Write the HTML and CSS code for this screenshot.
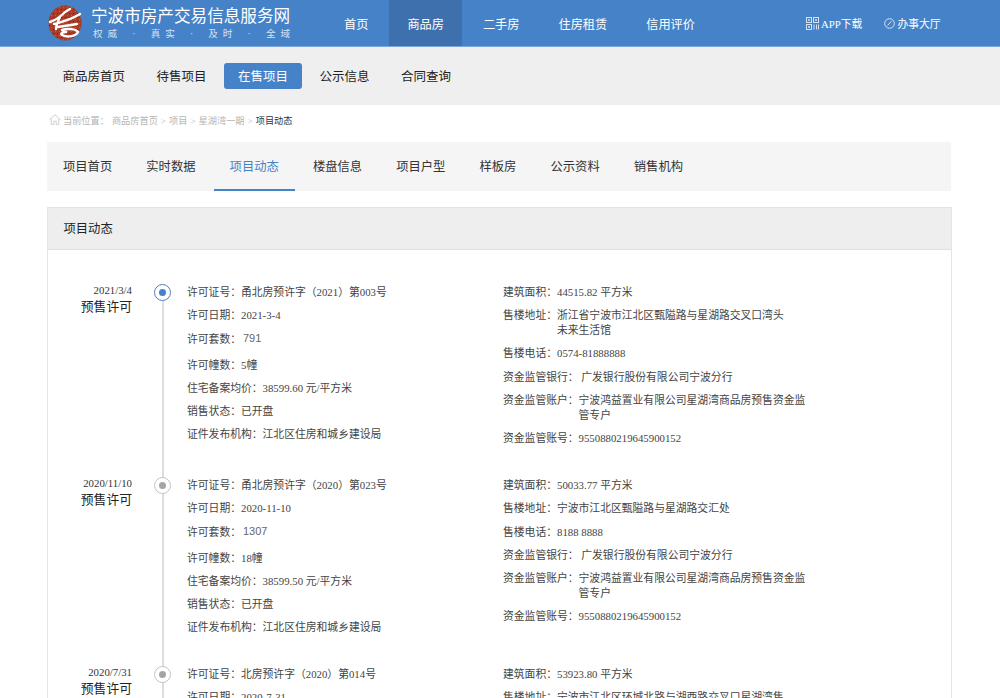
FILE: index.html
```html
<!DOCTYPE html>
<html lang="en">
<head>
    <meta charset="UTF-8">
    <meta name="viewport" content="width=device-width, initial-scale=1.0">
    <title>项目动态</title>
    <link rel="stylesheet" href="styles.css">
</head>
<body>
    <header class="top-bar">
        <div class="logo">
            <svg class="logo-mark" width="34" height="36" viewBox="0 0 34 36">
                <defs>
                    <pattern id="grain" width="4" height="4" patternUnits="userSpaceOnUse">
                        <rect width="4" height="4" fill="#a93c26"/>
                        <rect x="1" y="0" width="1" height="1" fill="#5e2a1f"/>
                        <rect x="3" y="2" width="1" height="1" fill="#d0573a"/>
                    </pattern>
                </defs>
                <ellipse cx="17" cy="18" rx="16.5" ry="17.5" fill="url(#grain)"/>
                <path d="M2 17 C8 15 12 12 16 8 C18 6 20 5 22 4 M12 12 C10 16 8 20 8 24 M6 19 C14 17 24 14 32 9 M10 22 C16 21 24 20 29 19 M14 25 C20 23 28 24 30 27 C28 31 20 33 14 30 C12 29 14 27 18 27" fill="none" stroke="#fff" stroke-width="2.4" stroke-linecap="round"/>
            </svg>
            <div class="logo-text">
                <div class="logo-title">宁波市房产交易信息服务网</div>
                <div class="logo-sub"><span>权威</span><span>·</span><span>真实</span><span>·</span><span>及时</span><span>·</span><span>全域</span></div>
            </div>
        </div>
        <nav class="main-nav">
            <a>首页</a>
            <a class="active">商品房</a>
            <a>二手房</a>
            <a>住房租赁</a>
            <a>信用评价</a>
        </nav>
        <div class="top-links">
            <a class="app-link">
                <svg width="13" height="13" viewBox="0 0 13 13" fill="none" stroke="#d5e2f2" stroke-width="1">
                    <rect x="0.5" y="0.5" width="5" height="5"/>
                    <rect x="7.5" y="0.5" width="5" height="5"/>
                    <rect x="0.5" y="7.5" width="5" height="5"/>
                    <path d="M2.5 2.5h1v1h-1zM9.5 2.5h1v1h-1zM2.5 9.5h1v1h-1zM8 7.5v5M10.5 7.5v5M12.5 7.5v5"/>
                </svg>
                APP下载
            </a>
            <a class="hall-link">
                <svg width="11" height="11" viewBox="0 0 11 11" fill="none" stroke="#d5e2f2" stroke-width="1">
                    <circle cx="5.5" cy="5.5" r="4.8"/>
                    <path d="M3.5 7.5 L7.5 3.2"/>
                </svg>
                办事大厅
            </a>
        </div>
    </header>

    <div class="sub-nav">
        <a>商品房首页</a>
        <a>待售项目</a>
        <a class="active">在售项目</a>
        <a>公示信息</a>
        <a>合同查询</a>
    </div>

    <div class="crumbs">
        <svg width="12" height="11" viewBox="0 0 12 11" fill="none" stroke="#cfcfcf" stroke-width="1">
            <path d="M0.5 5.8 L6 0.8 L11.5 5.8 M2.2 4.6 V10.5 H4.8 V7.2 H7.2 V10.5 H9.8 V4.6"/>
        </svg>
        <span class="crumb-label">当前位置：</span>
        <span class="crumb-path">商品房首页 &gt; 项目 &gt; 星湖湾一期 &gt; </span>
        <span class="crumb-current">项目动态</span>
    </div>

    <div class="tabs">
        <a>项目首页</a>
        <a>实时数据</a>
        <a class="active">项目动态</a>
        <a>楼盘信息</a>
        <a>项目户型</a>
        <a>样板房</a>
        <a>公示资料</a>
        <a>销售机构</a>
    </div>

    <section class="panel">
        <h2 class="panel-head">项目动态</h2>
        <div class="timeline">

            <div class="event">
                <div class="event-date">
                    <div class="date">2021/3/4</div>
                    <div class="kind">预售许可</div>
                </div>
                <div class="axis"><span class="dot current"></span></div>
                <div class="col-left">
                    <div class="row">许可证号：甬北房预许字（2021）第003号</div>
                    <div class="row">许可日期：2021-3-4</div>
                    <div class="row row-count">许可套数：<span class="count">791</span></div>
                    <div class="row">许可幢数：5幢</div>
                    <div class="row">住宅备案均价：38599.60 元/平方米</div>
                    <div class="row">销售状态：已开盘</div>
                    <div class="row">证件发布机构：江北区住房和城乡建设局</div>
                </div>
                <div class="col-right">
                    <div class="row">建筑面积：44515.82 平方米</div>
                    <div class="row pair"><span>售楼地址：</span><span class="value">浙江省宁波市江北区甄隘路与星湖路交叉口湾头未来生活馆</span></div>
                    <div class="row">售楼电话：0574-81888888</div>
                    <div class="row">资金监管银行：&nbsp;广发银行股份有限公司宁波分行</div>
                    <div class="row pair"><span>资金监管账户：</span><span class="value">宁波鸿益置业有限公司星湖湾商品房预售资金监管专户</span></div>
                    <div class="row">资金监管账号：9550880219645900152</div>
                </div>
            </div>

            <div class="event">
                <div class="event-date">
                    <div class="date">2020/11/10</div>
                    <div class="kind">预售许可</div>
                </div>
                <div class="axis"><span class="dot"></span></div>
                <div class="col-left">
                    <div class="row">许可证号：甬北房预许字（2020）第023号</div>
                    <div class="row">许可日期：2020-11-10</div>
                    <div class="row row-count">许可套数：<span class="count">1307</span></div>
                    <div class="row">许可幢数：18幢</div>
                    <div class="row">住宅备案均价：38599.50 元/平方米</div>
                    <div class="row">销售状态：已开盘</div>
                    <div class="row">证件发布机构：江北区住房和城乡建设局</div>
                </div>
                <div class="col-right">
                    <div class="row">建筑面积：50033.77 平方米</div>
                    <div class="row pair"><span>售楼地址：</span><span class="value">宁波市江北区甄隘路与星湖路交汇处</span></div>
                    <div class="row">售楼电话：8188 8888</div>
                    <div class="row">资金监管银行：&nbsp;广发银行股份有限公司宁波分行</div>
                    <div class="row pair"><span>资金监管账户：</span><span class="value">宁波鸿益置业有限公司星湖湾商品房预售资金监管专户</span></div>
                    <div class="row">资金监管账号：9550880219645900152</div>
                </div>
            </div>

            <div class="event">
                <div class="event-date">
                    <div class="date">2020/7/31</div>
                    <div class="kind">预售许可</div>
                </div>
                <div class="axis"><span class="dot"></span></div>
                <div class="col-left">
                    <div class="row">许可证号：北房预许字（2020）第014号</div>
                    <div class="row">许可日期：2020-7-31</div>
                </div>
                <div class="col-right">
                    <div class="row">建筑面积：53923.80 平方米</div>
                    <div class="row pair"><span>售楼地址：</span><span class="value">宁波市江北区环城北路与湖西路交叉口星湖湾售楼处</span></div>
                </div>
            </div>

        </div>
    </section>
</body>
</html>
```

FILE: styles.css
```css
html, body {
    margin: 0;
    height: 698px;
    overflow: hidden;
}
body {
    font-family: "Liberation Serif", "Noto Sans CJK SC", serif;
    color: #333;
    background: #fff;
}

.top-bar {
    display: flex;
    align-items: center;
    height: 46px;
    background: #4682c8;
    color: #fff;
    border-bottom: 1px solid #7ba6da;
}
.logo {
    display: flex;
    align-items: center;
    margin-left: 48px;
    width: 278px;
}
.logo-mark {
    flex: none;
    margin-right: 9px;
}
.logo-title {
    font-size: 16.6px;
    line-height: 20px;
    white-space: nowrap;
}
.logo-sub {
    display: flex;
    justify-content: space-between;
    margin-top: 1px;
    padding-left: 2px;
    font-size: 9.6px;
    line-height: 12px;
    color: #d5e2f2;
}
.logo-sub span:nth-child(odd) {
    letter-spacing: 5px;
    margin-right: -5px;
}
.main-nav {
    display: flex;
    align-self: stretch;
    gap: 3px;
}
.main-nav a {
    display: flex;
    align-items: center;
    padding: 1px 18px 0;
    font-size: 12.2px;
}
.main-nav a.active {
    background: #3f70ae;
}
.top-links {
    display: flex;
    align-items: center;
    margin-left: 93px;
    font-size: 10.8px;
}
.top-links a {
    display: flex;
    align-items: center;
    gap: 2px;
}
.hall-link {
    margin-left: 22px;
}

.sub-nav {
    display: flex;
    align-items: center;
    height: 58px;
    padding-left: 48.5px;
    gap: 3.5px;
    background: #efefef;
}
.sub-nav a {
    padding: 0 14px;
    height: 26px;
    line-height: 29px;
    font-size: 12.5px;
    border-radius: 3px;
    color: #222;
}
.sub-nav a.active {
    background: #4682c8;
    color: #fff;
}

.crumbs {
    display: flex;
    align-items: center;
    height: 30px;
    padding-left: 49px;
    font-size: 9.2px;
    color: #b5b5b5;
    white-space: pre;
}
.crumbs svg {
    margin-right: 2px;
    margin-top: -2px;
}
.crumb-label {
    margin-right: 3px;
}
.crumb-path {
    word-spacing: 0.7px;
}
.crumb-current {
    color: #333;
}

.tabs {
    display: flex;
    gap: 2.1px;
    height: 49px;
    margin: 7px 49px 0 47px;
    background: #f5f5f5;
}
.tabs a {
    padding: 0 16px;
    line-height: 51px;
    font-size: 12.3px;
    color: #333;
}
.tabs a.active {
    color: #4682c8;
    box-shadow: inset 0 -2px 0 #4682c8;
}

.panel {
    margin: 16px 48px 0 47px;
    border: 1px solid #e4e4e4;
}
.panel-head {
    margin: 0;
    height: 41px;
    padding-left: 15.5px;
    font-size: 12.3px;
    font-weight: 400;
    line-height: 43px;
    background: #eee;
    border-bottom: 1px solid #e0e0e0;
    color: #222;
}
.timeline {
    padding-top: 35px;
}

.event {
    display: flex;
    padding-bottom: 24px;
    font-size: 10.8px;
    line-height: 15px;
    color: #444;
}
.event-date {
    width: 84px;
    text-align: right;
}
.date {
    margin-top: -2px;
    color: #333;
}
.kind {
    margin-top: 1px;
    font-size: 12.8px;
    line-height: 17px;
    color: #222;
}
.axis {
    position: relative;
    width: 55px;
    margin-bottom: -24px;
}
.axis::before {
    content: "";
    position: absolute;
    left: 30px;
    top: 0;
    bottom: 0;
    width: 2px;
    background: #ddd;
}
.dot {
    position: absolute;
    left: 22px;
    top: -1px;
    box-sizing: border-box;
    width: 17px;
    height: 17px;
    border: 1px solid #c4c4c4;
    border-radius: 50%;
    background: #fff;
}
.dot::after {
    content: "";
    position: absolute;
    left: 4px;
    top: 4px;
    width: 7px;
    height: 7px;
    border-radius: 50%;
    background: #a5a5a5;
}
.dot.current {
    border-color: #4682c8;
}
.dot.current::after {
    background: #4682c8;
}

.col-left {
    width: 316px;
}
.col-right {
    width: 320px;
}
.row {
    margin-bottom: 8px;
    white-space: nowrap;
}
.col-right .row {
    margin-bottom: 8.2px;
}
.row-count {
    height: 18px;
    padding-top: 1px;
}
.count {
    position: relative;
    top: -1px;
    margin-left: 2px;
    font-family: "Liberation Sans", sans-serif;
    font-size: 11px;
    color: #666;
}
.pair {
    display: flex;
}
.pair .value {
    width: 228px;
    white-space: normal;
}
```
